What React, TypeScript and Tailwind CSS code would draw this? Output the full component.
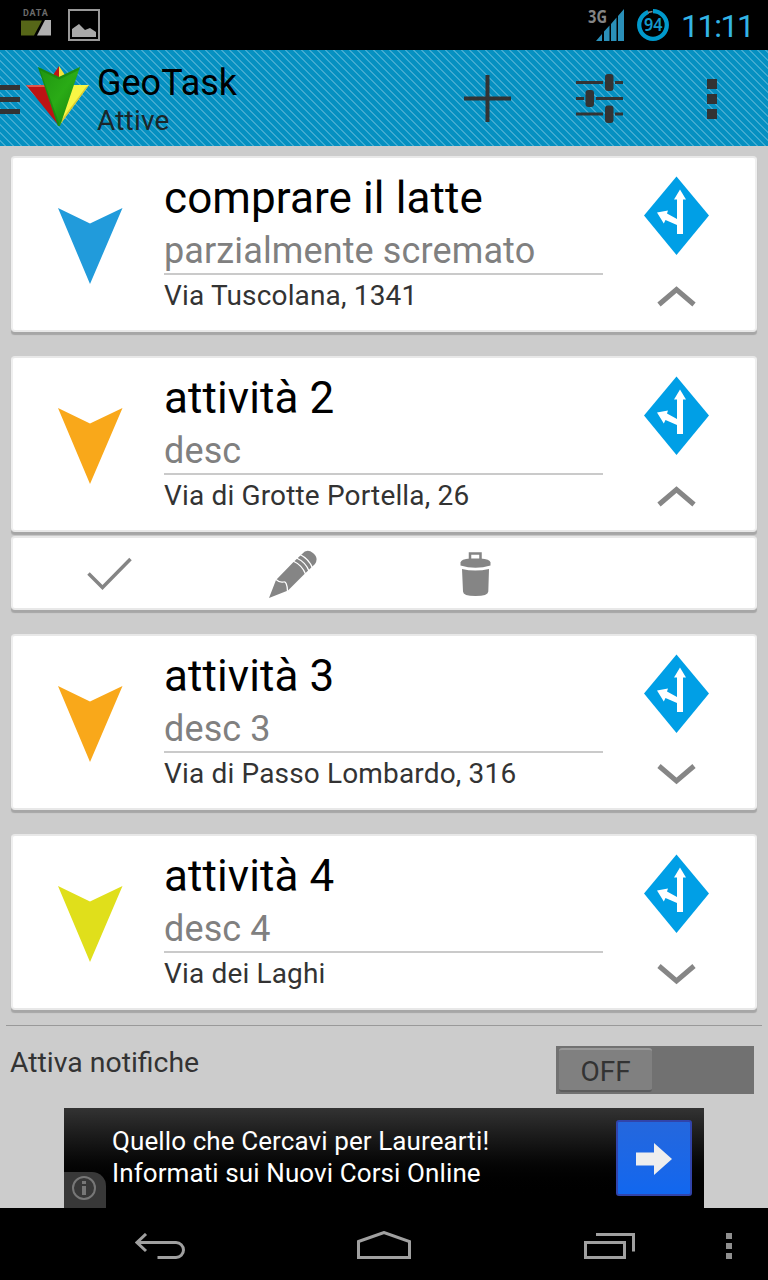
import type { ReactNode } from "react"
import { clsx } from "clsx"

type Task = {
  title: string
  desc: string
  address: string
  color: string
  open: boolean
  actions?: boolean
}

const tasks: Task[] = [
  {
    title: "comprare il latte",
    desc: "parzialmente scremato",
    address: "Via Tuscolana, 1341",
    color: "#219bdb",
    open: true,
  },
  {
    title: "attività 2",
    desc: "desc",
    address: "Via di Grotte Portella, 26",
    color: "#f9a81a",
    open: true,
    actions: true,
  },
  {
    title: "attività 3",
    desc: "desc 3",
    address: "Via di Passo Lombardo, 316",
    color: "#f9a81a",
    open: false,
  },
  {
    title: "attività 4",
    desc: "desc 4",
    address: "Via dei Laghi",
    color: "#e0df1b",
    open: false,
  },
]

function StatusBar() {
  return (
    <div className="flex h-[50px] items-start bg-black">
      <div className="ml-[21px] mt-[8px] w-[30px]">
        <p className="ml-[2px] text-[9px] leading-[10px] font-bold tracking-[0.800px] text-[#6b6b6b]">DATA</p>
        <svg width="30" height="16" className="mt-[2px] block">
          <path d="M0 .5h21L13 15.500H0z" fill="#566618" />
          <path d="M24 0h6v15.500H16z" fill="#b0b0b0" />
        </svg>
      </div>
      <svg width="32" height="32" className="ml-[17px] mt-[9px] block">
        <rect x="1" y="1" width="30" height="30" fill="none" stroke="#999" strokeWidth="2" />
        <path d="M4 20l7-5 6 6 5-2 6 4v5H4z" fill="#a9a9a9" />
      </svg>
      <div className="ml-auto flex">
        <svg width="24" height="32" className="block overflow-visible">
          <text
            x="2"
            y="23"
            fontSize="18"
            fontWeight="700"
            textLength="19"
            lengthAdjust="spacingAndGlyphs"
            fill="#858585"
            className="font-['Noto_Sans',sans-serif]"
          >
            3G
          </text>
        </svg>
        <svg width="29" height="32" className="-ml-[14px] mt-[9px] block" fill="#2a8fb8">
          <path d="M0 32l6-7v7zM8 32v-9.500l5.500-6V32zM15 32V15l5.500-6.500V32zM22 32V7l6-7v32z" />
        </svg>
        <svg width="32" height="32" viewBox="0 0 32 32" className="ml-[12px] mt-[9px] block">
          <circle cx="16" cy="16" r="13.800" fill="none" stroke="#0099cc" strokeWidth="4.300" />
          <path d="M10 0h6v6h-3.500z" fill="#000" />
          <path d="M11 3.500l4.500-1" stroke="#888" strokeWidth="1.500" />
          <text
            x="7"
            y="22"
            fontSize="17"
            fontWeight="600"
            textLength="18.500"
            lengthAdjust="spacingAndGlyphs"
            fill="#1298cb"
            className="font-['Noto_Sans',sans-serif]"
          >
            94
          </text>
        </svg>
        <span className="ml-[12px] mr-[14px] mt-[7px] w-[73px] text-[32px] leading-[38px] tracking-[-1.400px] whitespace-nowrap text-[#33b5e5]">
          11:11
        </span>
      </div>
    </div>
  )
}

function Logo() {
  return (
    <svg width="64" height="62" viewBox="0 0 64 62" className="block">
      <defs>
        <linearGradient id="green" x1="0" y1="0" x2="1" y2="1">
          <stop offset="0" stopColor="#1f9410" />
          <stop offset="0.500" stopColor="#2aab16" />
          <stop offset="1" stopColor="#15800c" />
        </linearGradient>
      </defs>
      <path d="M33 0l6 9-6 3z" fill="#f5e53a" />
      <path d="M33 0l-6 9 6 3z" fill="#c01616" />
      <path d="M0 19h20l13 41z" fill="#bd1414" />
      <path d="M0 19h20l.5 2H2z" fill="#e0574a" />
      <path d="M63 19H45L33 60z" fill="#f8f645" />
      <path d="M63 19L33 60l1-4 26-35z" fill="#d9cb30" />
      <path d="M12 1l21 10L54 1 34 60h-2z" fill="url(#green)" />
      <path d="M12 1l21 10L54 1l-1 3-20 9.500L14 4l19 53-1 3z" fill="#14760c" opacity=".5" />
    </svg>
  )
}

function Header() {
  return (
    <div className="relative h-24 bg-[#0590c1]">
      <svg width="768" height="96" className="absolute inset-0">
        <defs>
          <pattern id="stripes" width="8" height="8" patternUnits="userSpaceOnUse">
            <path
              d="M5 0h2v1H5zM6 1h2v1H6zM7 2h1v1H7zM0 2h1v1H0zM0 3h2v1H0zM1 4h2v1H1zM2 5h2v1H2zM3 6h2v1H3zM4 7h2v1H4z"
              fill="#40aad0"
              shapeRendering="crispEdges"
            />
          </pattern>
        </defs>
        <rect width="768" height="96" fill="url(#stripes)" />
      </svg>
      <div className="relative flex h-full items-start">
        <div className="mt-[35px] flex w-5 flex-col gap-[7px]">
          <div className="h-[5px] bg-[#333]" />
          <div className="h-[5px] bg-[#333]" />
          <div className="h-[5px] bg-[#333]" />
        </div>
        <div className="ml-[6px] mt-[16px]">
          <Logo />
        </div>
        <div className="ml-[7px] mt-[12px] whitespace-nowrap">
          <h1 className="text-[36px] leading-[42px] text-black">GeoTask</h1>
          <p className="mt-[1px] text-[28px] leading-[32px] tracking-[0.200px] text-[#1c2629]">Attive</p>
        </div>
        <svg width="48" height="48" className="absolute left-[464px] top-[25px]" stroke="#333" strokeWidth="4">
          <path d="M0 23.500h47M23.500 0v47" />
        </svg>
        <svg width="48" height="50" className="absolute left-[576px] top-[24px]" fill="#333">
          <path d="M0 7h27v3H0zM39 7h8v3h-8zM0 23h8v3H0zM20 23h27v3H20zM0 38.500h27v3H0zM39 38.500h8v3h-8z" />
          <rect x="29" y="0" width="8.500" height="17" rx="3" />
          <rect x="9.500" y="16" width="8.500" height="17" rx="3" />
          <rect x="29" y="31.500" width="8.500" height="17.500" rx="3" />
        </svg>
        <div className="absolute left-[707px] top-[29px] flex flex-col gap-[5px]">
          <div className="size-[10px] bg-[#333]" />
          <div className="size-[10px] bg-[#333]" />
          <div className="size-[10px] bg-[#333]" />
        </div>
      </div>
    </div>
  )
}

// White panel with the thick bottom edge
function Card({ className, children }: { className?: string; children: ReactNode }) {
  return (
    <div
      className={clsx(
        "mx-[11px] flex rounded-[4px] border-2 border-[#e8e8e8] border-x-[#efefef] bg-white shadow-[0_3px_1px_-0.5px_#a6a6a6]",
        className,
      )}
    >
      {children}
    </div>
  )
}

function TaskCard({ task }: { task: Task }) {
  return (
    <Card className="h-[176px]">
      <svg width="66" height="78" className="ml-[45px] mt-[50px] block shrink-0">
        <path d="M0 0l32 15.500L64.500 0 32 76z" fill={task.color} />
      </svg>
      <div className="ml-[40px] w-[439px] whitespace-nowrap">
        <h2 className="mt-[14px] text-[44px] leading-[52px] tracking-[0.100px] text-black">{task.title}</h2>
        <div className="flex h-[51px] items-start border-b-2 border-[#cacaca]">
          <p className="mt-[6px] text-[36px] leading-[42px] tracking-[0.120px] text-[#808080]">{task.desc}</p>
        </div>
        <p className="mt-[5px] text-[28px] leading-[32px] tracking-[0.160px] text-[#333]">{task.address}</p>
      </div>
      <div className="ml-[41px] mt-[18px] flex w-[66px] flex-col items-center">
        <svg width="66" height="79" className="block">
          <path d="M32.500 .5L65 39.500 32.500 79 0 39.500z" fill="#009fe6" />
          <path d="M36 13.500l6 10H39v34.500h-6V49L21.500 44l-1.700 3.500L13 36.500 24 34.500l-1 3 10 5.500V23.500h-3z" fill="#fff" />
        </svg>
        <svg width="40" height="22" className="mt-[31px] block">
          <path d={task.open ? "M2 18.500L19.500 3.500 37 18.500" : "M2 2L19.500 17 37 2"} fill="none" stroke="#868686" strokeWidth="5" />
        </svg>
      </div>
    </Card>
  )
}

function ActionsCard() {
  return (
    <Card className="mt-1 h-[74px]">
      <svg width="46" height="34" className="ml-[74px] mt-[19px] block">
        <path d="M1.500 16.500L15.500 30.500 43.500 2" fill="none" stroke="#858585" strokeWidth="3.500" />
      </svg>
      <svg width="49" height="49" viewBox="0 0 49 49" className="ml-[136px] mt-[12px] block">
        <path d="M0 48L7 30 24.500 12 33 4Q38-2 44 3T46 14L35.500 24 19 40.500z" fill="#858585" />
        <path
          d="M7 29.500Q11 33 14.500 32T18.500 41M24 11Q33 15 36.500 24M27.500 8Q36.500 12 40 21M31 4.500Q40 9 43.500 18"
          fill="none"
          stroke="#fff"
          strokeWidth="1.300"
        />
      </svg>
      <svg width="32" height="46" className="ml-[142px] mt-[14px] block" fill="#858585">
        <path d="M10 8V1.500h10.500V8" fill="none" stroke="#858585" strokeWidth="2.500" />
        <path d="M.5 10.500Q1 7 10 6.500h10.500q9.500 .5 10 4v3Q15.500 18 .5 13.500z" />
        <path d="M2 17Q15 20 29 17l-.7 22.500Q28 44 15.500 44T3 39.500z" />
      </svg>
    </Card>
  )
}

function Notifications() {
  return (
    <div className="mx-[6px] mt-[15px] flex h-[83px] items-start border-t border-[#999]">
      <p className="ml-[4px] mt-[21px] text-[28.400px] leading-[32px] whitespace-nowrap text-[#333]">Attiva notifiche</p>
      <div className="ml-auto mr-[8px] mt-[20px] h-12 w-[198px] bg-[#717171] p-[2px] pl-[3px]">
        <div className="flex h-[44px] w-[93px] items-center justify-center rounded-[3px] border-t-2 border-b-2 border-t-[#999] border-b-[#5c5c5c] bg-[#808080] pt-[3px] text-[28px] text-[#333]">
          OFF
        </div>
      </div>
    </div>
  )
}

function AdBanner() {
  return (
    <div className="relative mx-auto flex h-[100px] w-[640px] items-start bg-linear-to-b from-[#333] to-black to-90%">
      <p className="ml-[48px] mt-[17px] text-[26px] leading-[32px] tracking-[0.100px] whitespace-nowrap text-white">
        Quello che Cercavi per Laurearti!
        <br />
        Informati sui Nuovi Corsi Online
      </p>
      <div className="mt-[12px] mr-[12px] ml-auto flex size-[76px] items-center justify-center rounded-[3px] border-2 border-[#3144ab] bg-linear-to-b from-[#2467dd] to-[#1167ef]">
        <svg width="36" height="32" className="mt-[1px] block">
          <path d="M0 9.500h18V0l18 16-18 16V22.500H0z" fill="#eee" />
        </svg>
      </div>
      <div className="absolute bottom-0 left-0 flex h-[36px] w-[42px] rounded-tr-[14px] bg-[#383838]">
        <svg width="24" height="24" className="ml-[8px] mt-[4px] block">
          <circle cx="12" cy="12" r="11" fill="none" stroke="#777" strokeWidth="2" />
          <path d="M12 5v3M12 10v9" stroke="#777" strokeWidth="4" />
        </svg>
      </div>
    </div>
  )
}

function NavBar() {
  return (
    <div className="flex h-[72px] items-start bg-black">
      <svg width="51" height="28" className="ml-[135px] mt-[25px] block" fill="none" stroke="#a0a0a0" strokeWidth="3">
        <path d="M11 1L2 9.500 11 18M2 9.500h39a7.500 7.500 0 0 1 0 15H22.500" />
      </svg>
      <svg width="54" height="29" className="ml-[171px] mt-[23px] block" fill="none" stroke="#a0a0a0" strokeWidth="3">
        <path d="M1.500 10.500L27 1.500l25.500 9v16h-51z" />
      </svg>
      <svg width="52" height="27" className="ml-[173px] mt-[25px] block" fill="none" stroke="#a0a0a0" strokeWidth="3">
        <path d="M1.500 9.500h39v15h-39zM12 1.500h37.500v17" />
      </svg>
      <div className="ml-[90px] mt-[25px] flex flex-col gap-[4px]">
        <div className="size-[6px] bg-[#8f8f8f]" />
        <div className="size-[6px] bg-[#8f8f8f]" />
        <div className="size-[6px] bg-[#8f8f8f]" />
      </div>
    </div>
  )
}

export default function App() {
  return (
    <div className="h-[1280px] w-[768px] overflow-hidden bg-[#ccc] font-[Roboto,sans-serif]">
      <StatusBar />
      <Header />

      {/* Task list */}
      <div className="flex flex-col gap-6 pt-[10px]">
        {tasks.map((task) => (
          <div key={task.title}>
            <TaskCard task={task} />
            {task.actions && <ActionsCard />}
          </div>
        ))}
      </div>

      <Notifications />
      <AdBanner />
      <NavBar />
    </div>
  )
}
